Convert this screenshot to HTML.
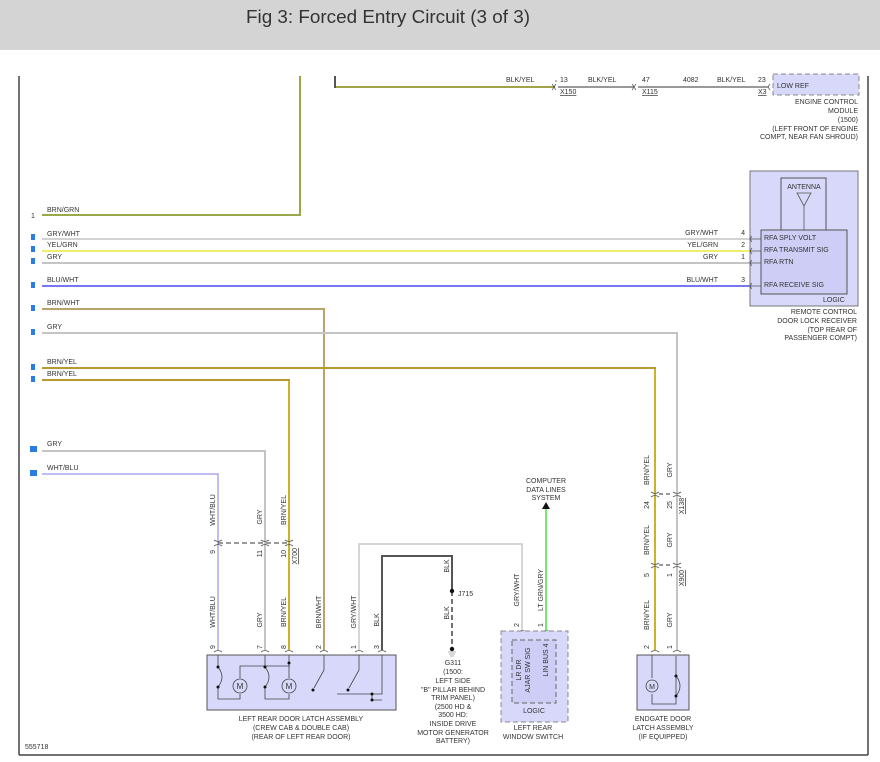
<!DOCTYPE html>
<html><head><meta charset="utf-8"><style>
html,body{margin:0;padding:0;background:#fff;}
svg{display:block;font-family:"Liberation Sans",Arial,sans-serif;}
.t{font-size:7px;fill:#333;}
.n{font-size:7px;fill:#333;}
</style></head><body>
<svg width="880" height="762" viewBox="0 0 880 762" xmlns="http://www.w3.org/2000/svg">
<rect x="0" y="0" width="880" height="50" fill="#d4d4d4"/>
<text x="388" y="23" text-anchor="middle" font-size="18" fill="#333" textLength="284" lengthAdjust="spacingAndGlyphs">Fig 3: Forced Entry Circuit (3 of 3)</text>
<!-- frame -->
<line x1="19" y1="76" x2="19" y2="755" stroke="#444" stroke-width="1.5"/>
<line x1="868" y1="76" x2="868" y2="755" stroke="#444" stroke-width="1.5"/>
<line x1="19" y1="755" x2="868" y2="755" stroke="#444" stroke-width="1.5"/>

<!-- top BLK/YEL -->
<polyline points="335,76 335,87 555,87" fill="none" stroke="#555" stroke-width="2"/>
<line x1="336" y1="87" x2="555" y2="87" stroke="#f0f040" stroke-width="1"/>
<line x1="558" y1="87" x2="634" y2="87" stroke="#999" stroke-width="2"/>
<line x1="638" y1="87" x2="768" y2="87" stroke="#999" stroke-width="2"/>
<g fill="none" stroke="#555" stroke-width="0.8">
<path d="M552,84 q3,3 0,6 M556,82 v-2 M556,84 q-3,3 0,6"/>
<path d="M632,84 q3,3 0,6 M636,84 q-3,3 0,6"/>
<path d="M770,84 q-3,3 0,6"/>
</g>
<text class="t" x="506" y="82">BLK/YEL</text>
<text class="n" x="560" y="82">13</text>
<text class="t" x="588" y="82">BLK/YEL</text>
<text class="n" x="642" y="82">47</text>
<text class="t" x="683" y="82">4082</text>
<text class="t" x="717" y="82">BLK/YEL</text>
<text class="n" x="758" y="82">23</text>
<text class="n" x="560" y="94" text-decoration="underline">X150</text>
<text class="n" x="642" y="94" text-decoration="underline">X115</text>
<text class="n" x="758" y="94" text-decoration="underline">X3</text>
<rect x="773" y="74" width="86" height="21" fill="#d8d8fa" stroke="#888" stroke-dasharray="5,3"/>
<text class="t" x="777" y="88">LOW REF</text>
<g class="t" text-anchor="end">
<text x="858" y="104">ENGINE CONTROL</text>
<text x="858" y="113">MODULE</text>
<text x="858" y="122">(1500)</text>
<text x="858" y="131">(LEFT FRONT OF ENGINE</text>
<text x="858" y="139">COMPT, NEAR FAN SHROUD)</text>
</g>

<!-- BRN/GRN -->
<polyline points="42,215 300,215 300,76" fill="none" stroke="#9aa84c" stroke-width="2"/>
<!-- horizontal wires -->
<line x1="42" y1="239" x2="750" y2="239" stroke="#c4c4c4" stroke-width="1.5"/>
<line x1="42" y1="251" x2="750" y2="251" stroke="#e8e83a" stroke-width="1.5"/>
<line x1="42" y1="263" x2="750" y2="263" stroke="#c4c4c4" stroke-width="2"/>
<line x1="42" y1="286" x2="750" y2="286" stroke="#4a4af0" stroke-width="1.5"/>
<polyline points="42,309 324,309 324,650" fill="none" stroke="#b8a36a" stroke-width="2"/>
<polyline points="42,333 677,333 677,650" fill="none" stroke="#c4c4c4" stroke-width="2"/>
<polyline points="42,368 655,368 655,650" fill="none" stroke="#b89a30" stroke-width="2"/>
<polyline points="42,380 289,380 289,650" fill="none" stroke="#b89a30" stroke-width="2"/>
<line x1="655" y1="369" x2="655" y2="650" stroke="#e8d820" stroke-width="0.8"/>
<line x1="289" y1="381" x2="289" y2="650" stroke="#e8d820" stroke-width="0.8"/>
<polyline points="42,451 265,451 265,650" fill="none" stroke="#c4c4c4" stroke-width="2"/>
<polyline points="42,474 218,474 218,650" fill="none" stroke="#a8a8f0" stroke-width="1.5"/>

<g class="t">
<text x="47" y="212">BRN/GRN</text>
<text x="47" y="236">GRY/WHT</text>
<text x="47" y="247">YEL/GRN</text>
<text x="47" y="259">GRY</text>
<text x="47" y="282">BLU/WHT</text>
<text x="47" y="305">BRN/WHT</text>
<text x="47" y="329">GRY</text>
<text x="47" y="364">BRN/YEL</text>
<text x="47" y="376">BRN/YEL</text>
<text x="47" y="446">GRY</text>
<text x="47" y="470">WHT/BLU</text>
</g>
<text class="n" x="31" y="218">1</text>
<g fill="#2a7de0">
<rect x="31" y="234" width="4" height="6"/><rect x="31" y="246" width="4" height="6"/>
<rect x="31" y="258" width="4" height="6"/><rect x="31" y="282" width="4" height="6"/>
<rect x="31" y="305" width="4" height="6"/><rect x="31" y="329" width="4" height="6"/>
<rect x="31" y="364" width="4" height="6"/><rect x="31" y="376" width="4" height="6"/>
<rect x="30" y="446" width="7" height="6"/><rect x="30" y="470" width="7" height="6"/>
</g>

<!-- receiver -->
<rect x="750" y="171" width="108" height="135" fill="#d8d8fa" stroke="#777"/>
<rect x="781" y="178" width="45" height="52" fill="#d8d8fa" stroke="#555"/>
<rect x="761" y="230" width="86" height="64" fill="#cdcdf6" stroke="#555"/>
<text class="t" x="804" y="189" text-anchor="middle">ANTENNA</text>
<path d="M797,193 h14 l-7,13 z M804,206 v24" fill="none" stroke="#555" stroke-width="0.8"/>
<g class="t">
<text x="764" y="240">RFA SPLY VOLT</text>
<text x="764" y="252">RFA TRANSMIT SIG</text>
<text x="764" y="264">RFA RTN</text>
<text x="764" y="287">RFA RECEIVE SIG</text>
<text x="823" y="302">LOGIC</text>
</g>
<g fill="none" stroke="#555" stroke-width="0.8">
<path d="M752,236 q-3,3 0,6 M752,248 q-3,3 0,6 M752,260 q-3,3 0,6 M752,283 q-3,3 0,6"/>
<path d="M751,239 h10 M751,251 h10 M751,263 h10 M751,286 h10"/>
</g>
<g class="t" text-anchor="end">
<text x="718" y="235">GRY/WHT</text><text x="745" y="235">4</text>
<text x="718" y="247">YEL/GRN</text><text x="745" y="247">2</text>
<text x="718" y="259">GRY</text><text x="745" y="259">1</text>
<text x="718" y="282">BLU/WHT</text><text x="745" y="282">3</text>
<text x="857" y="314">REMOTE CONTROL</text>
<text x="857" y="323">DOOR LOCK RECEIVER</text>
<text x="857" y="332">(TOP REAR OF</text>
<text x="857" y="340">PASSENGER COMPT)</text>
</g>

<!-- X700 -->
<line x1="218" y1="543" x2="289" y2="543" stroke="#333" stroke-dasharray="5,3"/>
<g fill="none" stroke="#555" stroke-width="0.8">
<path d="M214,540 q4,3 8,0 M214,546 q4,-3 8,0 M261,540 q4,3 8,0 M261,546 q4,-3 8,0 M285,540 q4,3 8,0 M285,546 q4,-3 8,0"/>
<path d="M651,492 q4,3 8,0 M651,497 q4,-3 8,0 M673,492 q4,3 8,0 M673,497 q4,-3 8,0"/>
<path d="M651,563 q4,3 8,0 M651,568 q4,-3 8,0 M673,563 q4,3 8,0 M673,568 q4,-3 8,0"/>
<path d="M214,652 q4,-3 8,0 M261,652 q4,-3 8,0 M285,652 q4,-3 8,0 M320,652 q4,-3 8,0 M355,652 q4,-3 8,0 M378,652 q4,-3 8,0 M651,652 q4,-3 8,0 M673,652 q4,-3 8,0 M518,632 q4,-3 8,0 M542,632 q4,-3 8,0"/>
</g>
<line x1="659" y1="494" x2="673" y2="494" stroke="#333" stroke-dasharray="4,3"/>
<line x1="659" y1="565" x2="673" y2="565" stroke="#333" stroke-dasharray="4,3"/>

<!-- GRY/WHT + BLK -->
<polyline points="359,650 359,544 522,544 522,630" fill="none" stroke="#c8c8c8" stroke-width="1.5"/>
<polyline points="382,650 382,556 452,556 452,591" fill="none" stroke="#555" stroke-width="2"/>
<line x1="452" y1="591" x2="452" y2="649" stroke="#444" stroke-width="1.5" stroke-dasharray="5,3"/>
<circle cx="452" cy="591" r="2.2" fill="#111"/><circle cx="452" cy="649" r="2.2" fill="#111"/>
<path d="M448,652 h8 M449,654 h6 M450,656 h4" stroke="#999" stroke-width="0.8"/>
<text class="t" x="458" y="596">J715</text>
<g class="t" text-anchor="middle">
<text x="453" y="665">G311</text><text x="453" y="674">(1500:</text><text x="453" y="683">LEFT SIDE</text>
<text x="453" y="692">"B" PILLAR BEHIND</text><text x="453" y="700">TRIM PANEL)</text>
<text x="453" y="709">(2500 HD &amp;</text><text x="453" y="717">3500 HD:</text>
<text x="453" y="726">INSIDE DRIVE</text><text x="453" y="735">MOTOR GENERATOR</text><text x="453" y="743">BATTERY)</text>
</g>

<!-- green -->
<line x1="546" y1="508" x2="546" y2="631" stroke="#44dd44" stroke-width="1.5"/>
<path d="M542,509 h8 l-4,-7 z" fill="#111"/>
<g class="t" text-anchor="middle">
<text x="546" y="483">COMPUTER</text><text x="546" y="492">DATA LINES</text><text x="546" y="500">SYSTEM</text>
</g>

<!-- window switch -->
<rect x="501" y="631" width="67" height="91" fill="#d8d8fa" stroke="#888" stroke-dasharray="5,3"/>
<rect x="512" y="640" width="44" height="63" fill="#cdcdf6" stroke="#666" stroke-dasharray="5,3"/>
<text class="t" x="534" y="713" text-anchor="middle">LOGIC</text>
<g class="t" text-anchor="middle"><text x="533" y="730">LEFT REAR</text><text x="533" y="739">WINDOW SWITCH</text></g>

<!-- latch box -->
<rect x="207" y="655" width="189" height="55" fill="#d8d8fa" stroke="#555"/>
<g fill="none" stroke="#444" stroke-width="0.8">
<path d="M218,655 v12 q8,10 0,20 v12 h22 v-5 M240,678 v-12 h50 M265,655 v12 q8,10 0,20 v12 h24 v-5 M289,655 v23"/>
<circle cx="240" cy="686" r="7"/><circle cx="289" cy="686" r="7"/>
<path d="M324,655 v15 l-10,18 M359,655 v15 l-10,18 M337,694 h45 v-39 M372,694 v6 h10"/>
</g>
<g fill="#111"><circle cx="218" cy="667" r="1.5"/><circle cx="218" cy="687" r="1.5"/><circle cx="265" cy="667" r="1.5"/><circle cx="265" cy="687" r="1.5"/><circle cx="289" cy="663" r="1.5"/><circle cx="313" cy="690" r="1.5"/><circle cx="348" cy="690" r="1.5"/><circle cx="372" cy="694" r="1.5"/><circle cx="372" cy="700" r="1.5"/></g>
<text x="240" y="689" font-size="8" text-anchor="middle" fill="#333">M</text>
<text x="289" y="689" font-size="8" text-anchor="middle" fill="#333">M</text>
<g class="t" text-anchor="middle">
<text x="301" y="721">LEFT REAR DOOR LATCH ASSEMBLY</text>
<text x="301" y="730">(CREW CAB &amp; DOUBLE CAB)</text>
<text x="301" y="739">(REAR OF LEFT REAR DOOR)</text>
</g>

<!-- endgate -->
<rect x="637" y="655" width="52" height="55" fill="#d8d8fa" stroke="#555"/>
<g fill="none" stroke="#444" stroke-width="0.8">
<path d="M652,655 v23 M652,694 v10 h24 v-48 M676,676 q8,10 0,20"/>
<circle cx="652" cy="686" r="6"/>
</g>
<circle cx="676" cy="676" r="1.5" fill="#111"/><circle cx="676" cy="696" r="1.5" fill="#111"/>
<text x="652" y="689" font-size="7" text-anchor="middle" fill="#333">M</text>
<g class="t" text-anchor="middle">
<text x="663" y="721">ENDGATE DOOR</text><text x="663" y="730">LATCH ASSEMBLY</text><text x="663" y="739">(IF EQUIPPED)</text>
</g>

<!-- vertical labels -->
<g class="t">
<text transform="translate(215,510) rotate(-90)" text-anchor="middle">WHT/BLU</text>
<text transform="translate(262,517) rotate(-90)" text-anchor="middle">GRY</text>
<text transform="translate(286,510) rotate(-90)" text-anchor="middle">BRN/YEL</text>
<text transform="translate(215,550) rotate(-90)" text-anchor="end">9</text>
<text transform="translate(262,550) rotate(-90)" text-anchor="end">11</text>
<text transform="translate(286,550) rotate(-90)" text-anchor="end">10</text>
<text transform="translate(297,548) rotate(-90)" text-anchor="end" text-decoration="underline">X700</text>
<text transform="translate(215,612) rotate(-90)" text-anchor="middle">WHT/BLU</text>
<text transform="translate(262,620) rotate(-90)" text-anchor="middle">GRY</text>
<text transform="translate(286,612) rotate(-90)" text-anchor="middle">BRN/YEL</text>
<text transform="translate(321,612) rotate(-90)" text-anchor="middle">BRN/WHT</text>
<text transform="translate(356,612) rotate(-90)" text-anchor="middle">GRY/WHT</text>
<text transform="translate(379,620) rotate(-90)" text-anchor="middle">BLK</text>
<text transform="translate(215,649) rotate(-90)">9</text>
<text transform="translate(262,649) rotate(-90)">7</text>
<text transform="translate(286,649) rotate(-90)">8</text>
<text transform="translate(321,649) rotate(-90)">2</text>
<text transform="translate(356,649) rotate(-90)">1</text>
<text transform="translate(379,649) rotate(-90)">3</text>
<text transform="translate(449,566) rotate(-90)" text-anchor="middle">BLK</text>
<text transform="translate(449,613) rotate(-90)" text-anchor="middle">BLK</text>
<text transform="translate(519,590) rotate(-90)" text-anchor="middle">GRY/WHT</text>
<text transform="translate(543,590) rotate(-90)" text-anchor="middle">LT GRN/GRY</text>
<text transform="translate(519,627) rotate(-90)">2</text>
<text transform="translate(543,627) rotate(-90)">1</text>
<text transform="translate(521,670) rotate(-90)" text-anchor="middle">LR DR</text>
<text transform="translate(530,670) rotate(-90)" text-anchor="middle">AJAR SW SIG</text>
<text transform="translate(548,660) rotate(-90)" text-anchor="middle">LIN BUS 4</text>
<text transform="translate(649,470) rotate(-90)" text-anchor="middle">BRN/YEL</text>
<text transform="translate(672,470) rotate(-90)" text-anchor="middle">GRY</text>
<text transform="translate(649,505) rotate(-90)" text-anchor="middle">24</text>
<text transform="translate(672,505) rotate(-90)" text-anchor="middle">25</text>
<text transform="translate(684,506) rotate(-90)" text-anchor="middle" text-decoration="underline">X138</text>
<text transform="translate(649,540) rotate(-90)" text-anchor="middle">BRN/YEL</text>
<text transform="translate(672,540) rotate(-90)" text-anchor="middle">GRY</text>
<text transform="translate(649,575) rotate(-90)" text-anchor="middle">5</text>
<text transform="translate(672,575) rotate(-90)" text-anchor="middle">1</text>
<text transform="translate(684,578) rotate(-90)" text-anchor="middle" text-decoration="underline">X900</text>
<text transform="translate(649,615) rotate(-90)" text-anchor="middle">BRN/YEL</text>
<text transform="translate(672,620) rotate(-90)" text-anchor="middle">GRY</text>
<text transform="translate(649,649) rotate(-90)">2</text>
<text transform="translate(672,649) rotate(-90)">1</text>
</g>
<text class="t" x="25" y="749">555718</text>
</svg>
</body></html>
